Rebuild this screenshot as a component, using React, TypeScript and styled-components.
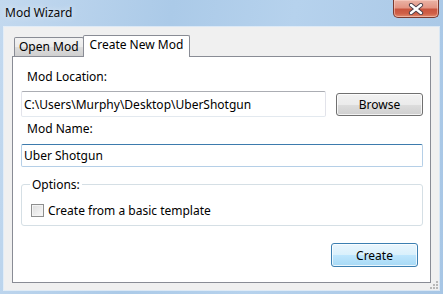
import styled, { createGlobalStyle } from 'styled-components';

const GlobalStyle = createGlobalStyle`
  html, body {
    margin: 0;
    padding: 0;
    background: #ffffff;
  }
  * {
    box-sizing: border-box;
  }
`;

const uiFont = `"Segoe UI", "Noto Sans", "Open Sans", sans-serif`;

const Window = styled.div`
  width: 443px;
  height: 294px;
  display: flex;
  flex-direction: column;
  background: linear-gradient(100deg, #c3d9ef 0%, #abcae8 35%, #b6d2ed 60%, #a7c6e5 100%);
  font-family: ${uiFont};
  font-size: 12px;
  color: #000;
`;

const TitleBar = styled.div`
  height: 27px;
  flex: none;
  display: flex;
  justify-content: space-between;
  align-items: flex-start;
`;

const Title = styled.span`
  margin: 5px 0 0 5px;
  line-height: 15px;
  color: #0a0a0a;
  text-shadow: 0 0 6px rgba(255, 255, 255, 0.8);
`;

const CloseButton = styled.div`
  width: 46px;
  height: 18px;
  margin-right: 4px;
  border: 1px solid #7a3a30;
  border-top: none;
  border-radius: 0 0 5px 5px;
  background: linear-gradient(180deg, #eab3a6 0%, #e39584 45%, #c9553f 55%, #d06048 80%, #e08a6e 100%);
  box-shadow: inset 0 0 0 1px rgba(255, 220, 210, 0.5);
  display: flex;
  align-items: center;
  justify-content: center;
`;

const Client = styled.div`
  flex: 1;
  margin: 0 4px 4px 4px;
  padding: 8px 8px 7px 8px;
  background: #f0f0f0;
  box-shadow: 0 0 0 1px rgba(255, 255, 255, 0.55);
  display: flex;
  flex-direction: column;
  position: relative;
`;

const TabRow = styled.div`
  height: 21px;
  flex: none;
  display: flex;
  align-items: flex-end;
  padding-left: 2px;
`;

const Tab = styled.div<{ $active?: boolean }>`
  height: ${(p) => (p.$active ? '22px' : '19px')};
  margin-bottom: ${(p) => (p.$active ? '-1px' : '0')};
  margin-left: ${(p) => (p.$active ? '-1px' : '0')};
  padding: 1px ${(p) => (p.$active ? '6px' : '4px')} 0;
  border: 1px solid #898c95;
  border-bottom: none;
  border-radius: 2px 2px 0 0;
  background: ${(p) =>
    p.$active ? '#ffffff' : 'linear-gradient(180deg, #f2f2f2 0%, #ebebeb 50%, #dddddd 51%, #cfcfcf 100%)'};
  line-height: 15px;
  position: relative;
  z-index: ${(p) => (p.$active ? 1 : 0)};
  white-space: nowrap;
`;

const Page = styled.div`
  flex: 1;
  border: 1px solid #898c95;
  background: #ffffff;
  padding: 0 7px 0 8px;
  display: flex;
  flex-direction: column;
`;

const FieldLabel = styled.div<{ $top: number }>`
  margin-top: ${(p) => p.$top}px;
  padding-left: 6px;
  line-height: 15px;
  height: 15px;
`;

const PathRow = styled.div`
  margin-top: 7px;
  display: flex;
  justify-content: space-between;
  align-items: center;
  height: 26px;
`;

const TextBox = styled.input<{ $focused?: boolean; $w?: number; $h: number }>`
  width: ${(p) => (p.$w ? `${p.$w}px` : '100%')};
  height: ${(p) => p.$h}px;
  margin: 0;
  padding: 0 2px;
  font-family: ${uiFont};
  font-size: 12px;
  color: #000;
  background: #fff;
  outline: none;
  border: 1px solid ${(p) => (p.$focused ? '#b5cfe7' : '#e2e3ea')};
  border-top-color: ${(p) => (p.$focused ? '#3d7bad' : '#abadb3')};
  border-bottom-color: ${(p) => (p.$focused ? '#b5cfe7' : '#e3e9ef')};
  border-radius: 2px;
`;

const NameBox = styled(TextBox)`
  margin-top: 8px;
  flex: none;
`;

const Button = styled.button<{ $default?: boolean }>`
  width: 87px;
  height: ${(p) => (p.$default ? '24px' : '23px')};
  margin: 0;
  padding: 0;
  font-family: ${uiFont};
  font-size: 12px;
  color: #000;
  border-radius: 3px;
  border: 1px solid ${(p) => (p.$default ? '#3c7fb1' : '#707070')};
  background: ${(p) =>
    p.$default
      ? 'linear-gradient(180deg, #eaf6fd 0%, #d9f0fc 50%, #bee6fd 51%, #a7d9f5 100%)'
      : 'linear-gradient(180deg, #f2f2f2 0%, #ebebeb 50%, #dddddd 51%, #cfcfcf 100%)'};
  box-shadow: inset 0 0 0 1px rgba(255, 255, 255, 0.75);
`;

const Group = styled.fieldset`
  margin: 10px 0 0 0;
  padding: 0 8px 7px 8px;
  border: 1px solid #d5dfe5;
  border-radius: 3px;
  min-width: 0;
`;

const Legend = styled.legend`
  padding: 0 2px;
  margin-left: 0;
  line-height: 15px;
`;

const CheckRow = styled.label`
  margin-top: 11px;
  padding-left: 1px;
  display: flex;
  align-items: center;
  gap: 4px;
  line-height: 15px;
`;

const CheckBox = styled.span`
  width: 13px;
  height: 13px;
  flex: none;
  border: 1px solid #8e8f8f;
  background: linear-gradient(135deg, #dcdcdc 0%, #eeeeee 60%, #f8f8f8 100%);
  box-shadow: inset 0 0 0 1px #f4f4f4;
`;

const Footer = styled.div`
  margin-top: 17px;
  padding-right: 5px;
  display: flex;
  justify-content: flex-end;
`;

const Grip = styled.svg`
  position: absolute;
  right: 1px;
  bottom: 1px;
`;

export default function App() {
  return (
    <>
      <GlobalStyle />
      <Window>
        <TitleBar>
          <Title>Mod Wizard</Title>
          <CloseButton>
            <svg width="16" height="12" viewBox="0 0 16 12">
              <path d="M3 2 L13 10 M13 2 L3 10" stroke="#4a3d48" strokeWidth="4.2" strokeLinecap="round" />
              <path d="M3 2 L13 10 M13 2 L3 10" stroke="#ffffff" strokeWidth="2.4" strokeLinecap="round" />
            </svg>
          </CloseButton>
        </TitleBar>
        <Client>
          <TabRow>
            <Tab>Open Mod</Tab>
            <Tab $active>Create New Mod</Tab>
          </TabRow>
          <Page>
            <FieldLabel $top={12}>Mod Location:</FieldLabel>
            <PathRow>
              <TextBox $w={305} $h={26} defaultValue="C:\Users\Murphy\Desktop\UberShotgun" readOnly />
              <Button>Browse</Button>
            </PathRow>
            <FieldLabel $top={4}>Mod Name:</FieldLabel>
            <NameBox $focused $h={23} defaultValue="Uber Shotgun" readOnly />
            <Group>
              <Legend>Options:</Legend>
              <CheckRow>
                <CheckBox />
                <span>Create from a basic template</span>
              </CheckRow>
            </Group>
            <Footer>
              <Button $default>Create</Button>
            </Footer>
          </Page>
          <Grip width="8" height="8" viewBox="0 0 8 8">
            <g fill="#b8b8b8">
              <rect x="6" y="0" width="2" height="2" />
              <rect x="3" y="3" width="2" height="2" />
              <rect x="6" y="3" width="2" height="2" />
              <rect x="0" y="6" width="2" height="2" />
              <rect x="3" y="6" width="2" height="2" />
              <rect x="6" y="6" width="2" height="2" />
            </g>
          </Grip>
        </Client>
      </Window>
    </>
  );
}
